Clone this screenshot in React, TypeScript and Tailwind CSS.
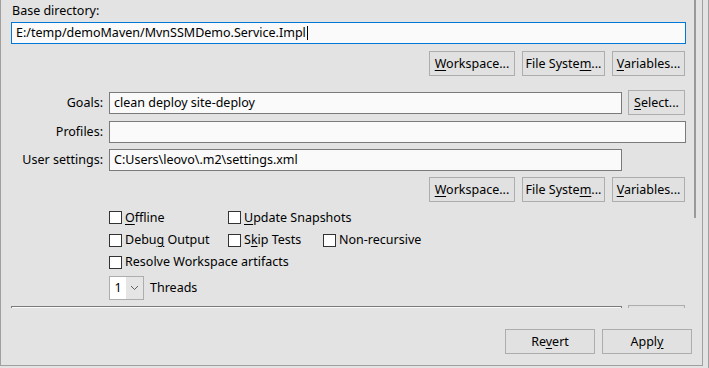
import React from "react";

const U = ({ children }: { children: React.ReactNode }) => <span className="underline underline-offset-2">{children}</span>;

const Btn = ({ children, w }: { children: React.ReactNode; w: string }) => (
  <div className={`h-[25px] ${w} border border-[#adadad] bg-[#e1e1e1] flex items-center justify-center text-black shrink-0 whitespace-nowrap`}>
    {children}
  </div>
);

const Input = ({ children, cls = "" }: { children?: React.ReactNode; cls?: string }) => (
  <div className={`h-[22px] border border-[#7a7a7a] bg-[#fafafa] flex items-center pl-[4px] text-black whitespace-nowrap ${cls}`}>{children}</div>
);

const Check = ({ children, w }: { children: React.ReactNode; w: string }) => (
  <div className={`flex items-center gap-[3px] shrink-0 whitespace-nowrap ${w}`}>
    <div className="w-[13px] h-[13px] border border-[#333] bg-white shrink-0" />
    <span>{children}</span>
  </div>
);

export default function App() {
  return (
    <div
      className="w-[709px] h-[368px] bg-[#e3e3e3] flex overflow-hidden text-[12.5px] leading-[16px] text-black"
      style={{ fontFamily: '"Noto Sans", "Noto Sans CJK SC", sans-serif' }}
    >
      <div className="w-[703px] h-[366px] border-l border-r border-b border-[#a0a0a0] flex flex-col shrink-0">
        <div className="h-[308px] flex overflow-hidden shrink-0">
          <div className="w-[693px] pl-[10px] pr-[8px] shrink-0">
            <div className="pt-[3px] h-[22px] pl-[1px]">Base directory:</div>
            <div className="h-[22px] border border-[#0078d7] bg-[#fafafa] flex items-center pl-[4px]">
              <span>E:/temp/demoMaven/MvnSSMDemo.Service.Impl</span>
              <span className="inline-block w-[1px] h-[14px] bg-black ml-[1px]" />
            </div>
            <div className="flex justify-end gap-[7px] mt-[7px] pr-[1px]">
              <Btn w="w-[86px]"><span><U>W</U>orkspace...</span></Btn>
              <Btn w="w-[83px]"><span>File Syste<U>m</U>...</span></Btn>
              <Btn w="w-[73px]"><span><U>V</U>ariables...</span></Btn>
            </div>
            <div className="flex items-center mt-[14px] h-[25px]">
              <div className="w-[93px] text-right pr-[1px] shrink-0">Goals:</div>
              <div className="ml-[5px] w-[513px] shrink-0"><Input>clean deploy site-deploy</Input></div>
              <div className="ml-[6px]"><Btn w="w-[57px]"><span><U>S</U>elect...</span></Btn></div>
            </div>
            <div className="flex items-center mt-[6px]">
              <div className="w-[93px] text-right pr-[1px] shrink-0">Profiles:</div>
              <div className="ml-[5px] flex-1"><Input /></div>
            </div>
            <div className="flex items-center mt-[6px]">
              <div className="w-[93px] text-right pr-[1px] shrink-0">User settings:</div>
              <div className="ml-[5px] w-[513px] shrink-0"><Input>C:Users\leovo\.m2\settings.xml</Input></div>
            </div>
            <div className="flex justify-end gap-[7px] mt-[6px] pr-[1px]">
              <Btn w="w-[86px]"><span><U>W</U>orkspace...</span></Btn>
              <Btn w="w-[83px]"><span>File Syste<U>m</U>...</span></Btn>
              <Btn w="w-[73px]"><span><U>V</U>ariables...</span></Btn>
            </div>
            <div className="pl-[98px] mt-[4px]">
              <div className="flex h-[23px] items-center">
                <Check w="w-[119px]"><U>O</U>ffline</Check>
                <Check w="w-[95px]"><U>U</U>pdate Snapshots</Check>
              </div>
              <div className="flex h-[22px] items-center">
                <Check w="w-[119px]">Debu<U>g</U> Output</Check>
                <Check w="w-[95px]">S<U>k</U>ip Tests</Check>
                <Check w="w-[120px]">Non-recursive</Check>
              </div>
              <div className="flex h-[22px] items-center">
                <Check w="w-[200px]">Resolve Workspace artifacts</Check>
              </div>
              <div className="flex items-center mt-[3px]">
                <div className="w-[35px] h-[24px] border border-[#adadad] bg-[#e5e5e5] flex shrink-0">
                  <div className="w-[16px] bg-white flex items-center justify-center">1</div>
                  <div className="flex-1 flex items-center justify-center">
                    <svg width="9" height="6" viewBox="0 0 9 6"><path d="M1 1 L4.5 4.5 L8 1" stroke="#606060" fill="none" strokeWidth="1" /></svg>
                  </div>
                </div>
                <span className="ml-[6px]">Threads</span>
              </div>
            </div>
            <div className="flex mt-[6px]">
              <div className="w-[611px] h-[22px] border border-[#7a7a7a] bg-[#fafafa] shrink-0" />
              <div className="ml-[6px] w-[57px] h-[25px] border border-[#adadad] bg-[#e1e1e1] -mt-[1px] shrink-0" />
            </div>
          </div>
          <div className="w-[2px] h-[218px] bg-[#9a9a9a] shrink-0" />
        </div>
        <div className="flex justify-end gap-[7px] pr-[10px] mt-[21px]">
          <Btn w="w-[90px]"><span>Re<U>v</U>ert</span></Btn>
          <Btn w="w-[90px]"><span>Appl<U>y</U></span></Btn>
        </div>
      </div>
      <div className="w-[5px] shrink-0" />
      <div className="w-[1px] h-full bg-[#a0a0a0] shrink-0" />
    </div>
  );
}
